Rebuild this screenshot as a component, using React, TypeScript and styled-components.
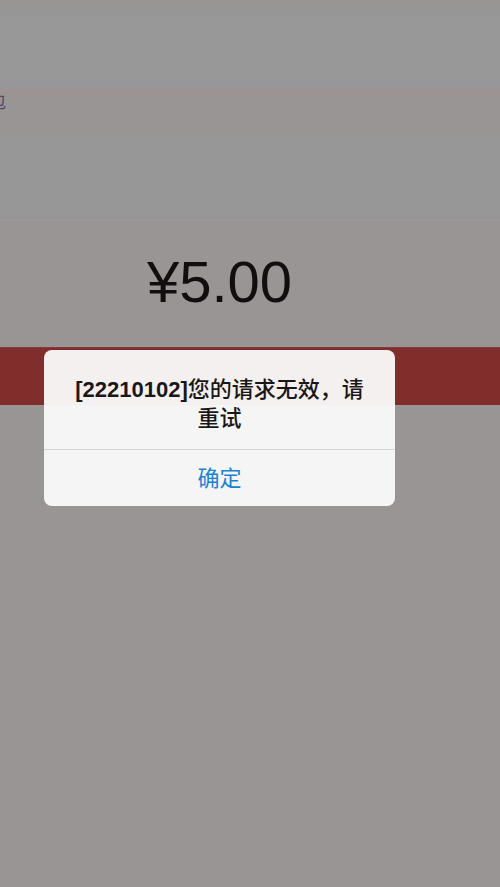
import styled, { createGlobalStyle } from "styled-components";

const GlobalStyle = createGlobalStyle`
  * {
    box-sizing: border-box;
  }

  body {
    margin: 0;
    background: #999595;
    font-family: "Liberation Sans", "Noto Sans CJK SC", sans-serif;
  }
`;

const Page = styled.main`
  position: relative;
  min-height: 100vh;
  overflow: hidden;
`;

const Band = styled.div<{ $color: string; $height: number }>`
  height: ${({ $height }) => $height}px;
  background: ${({ $color }) => $color};
`;

const TabRow = styled.div`
  height: 40px;
  background: #999595;
`;

const TabLabel = styled.span`
  display: flex;
  justify-content: flex-end;
  width: 6px;
  overflow: hidden;
  font-size: 17px;
  line-height: 16px;
  color: #4d4a66;
`;

const Amount = styled.section`
  height: 127px;
  padding: 28px 61px 0 0;
  border-top: 1px solid #9b9b9b;
  font-size: 58px;
  line-height: 66px;
  text-align: center;
  color: #120e0f;
`;

const PayButton = styled.button`
  display: block;
  width: 100%;
  height: 58px;
  border: 0;
  border-top: 1px solid #84393a;
  background: #812d2b;
`;

const Overlay = styled.div`
  position: absolute;
  inset: 0;
  padding: 350px 105px 0 44px;
`;

const Dialog = styled.div`
  border-radius: 8px;
  overflow: hidden;
  background: linear-gradient(#f4f0f0 55px, #f5f5f6 55px);
  text-align: center;
`;

const Message = styled.p`
  margin: 0;
  padding: 25px 24px 16px;
  font-size: 22px;
  font-weight: 500;
  line-height: 29px;
  color: #1a1717;
`;

const Confirm = styled.button`
  display: block;
  width: 100%;
  height: 57px;
  padding: 2px 0 0;
  border: 0;
  border-top: 1px solid #d3d4d8;
  background: transparent;
  font-family: inherit;
  font-size: 22px;
  line-height: 54px;
  color: #1c80d3;
`;

export default () => {
  return (
    <Page>
      <GlobalStyle />
      <Band $color="#999595" $height={10} />
      <Band $color="#959695" $height={5} />
      <Band $color="#979897" $height={65} />
      <Band $color="#97969a" $height={8} />
      <Band $color="#9d9491" $height={7} />
      <TabRow>
        <TabLabel>包</TabLabel>
      </TabRow>
      <Band $color="#979797" $height={85} />
      <Amount>¥5.00</Amount>
      <PayButton aria-label="支付" />
      <Overlay>
        <Dialog role="alertdialog" aria-describedby="message">
          <Message id="message">
            <strong>[22210102]</strong>您的请求无效，请重试
          </Message>
          <Confirm>确定</Confirm>
        </Dialog>
      </Overlay>
    </Page>
  );
};
